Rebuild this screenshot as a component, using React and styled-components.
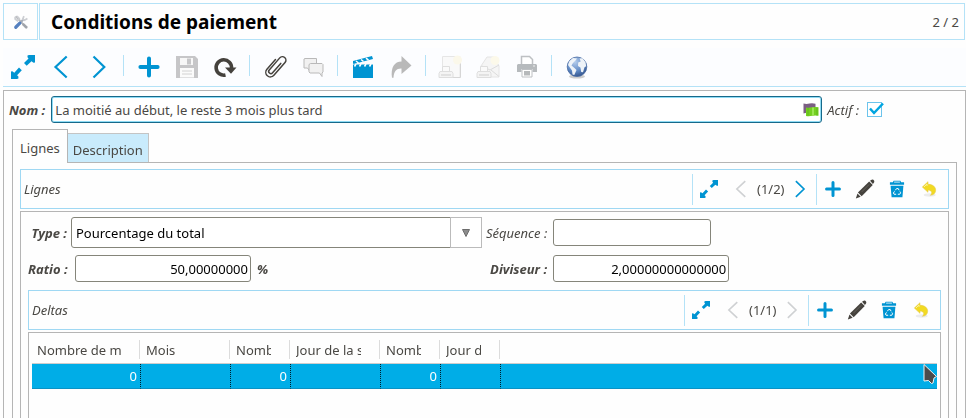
import React from "react";
import styled, { createGlobalStyle, css } from "styled-components";

const BLUE = "#0094d2";
const DARK = "#45423d";
const LIGHT_BLUE = "#b4e2f7";
const LINE_BLUE = "#9fd8f3";
const GREY = "#b5b5b5";
const TEXT = "#4a4844";

const GlobalStyle = createGlobalStyle`
  *, *::before, *::after { box-sizing: border-box; }
  body {
    margin: 0;
    background: #fefefe;
    color: ${TEXT};
    font: 13px/18px "Noto Sans", sans-serif;
  }
  button, input, select { font: inherit; color: inherit; margin: 0; }
`;

const Window = styled.main`
  height: 100vh;
  min-height: 400px;
  display: flex;
  flex-direction: column;
  overflow: hidden;
  padding: 3px 0 0 3px;
`;

const Header = styled.header`
  display: flex;
  gap: 1px;
  padding-right: 1px;
  height: 37px;
  flex: none;
`;

const MenuButton = styled.button`
  width: 35px;
  display: grid;
  place-items: center;
  padding: 0;
  border: 1px solid ${LIGHT_BLUE};
  background: none;
`;

const TitleBar = styled.div`
  flex: 1;
  display: flex;
  align-items: center;
  justify-content: space-between;
  padding: 0 5px 0 11px;
  border: 1px solid ${LIGHT_BLUE};
`;

const Title = styled.h1`
  margin: 0;
  color: #000;
  font-size: 19px;
  line-height: 26px;
  font-weight: 700;
`;

const Toolbar = styled.div`
  display: flex;
  align-items: center;
  flex: none;
  height: 39px;
  margin: 8px 0 3px;
  padding-left: 1px;
  border-bottom: 1px solid ${LIGHT_BLUE};
  background: #fcfdff;
`;

const ToolButton = styled.button`
  width: ${(p) => (p.$small ? 32 : 38)}px;
  height: 30px;
  padding: 0;
  border: 0;
  background: none;
  display: grid;
  place-items: center;
`;

const Divider = styled.span`
  width: 1px;
  height: 21px;
  margin: 0 6px 3px 5px;
  background: ${LIGHT_BLUE};
`;

const Frame = styled.section`
  flex: 1;
  min-height: 0;
  display: flex;
  flex-direction: column;
  border: 1px solid ${GREY};
  border-bottom: 0;
  padding: ${(p) => p.$pad};
`;

const NameRow = styled.div`
  display: flex;
  align-items: center;
  flex: none;
  padding: 0 83px 0 5px;
`;

const Label = styled.label`
  font-style: italic;
  font-weight: ${(p) => (p.$required ? 700 : 400)};
  white-space: nowrap;
  text-align: right;
`;

const NameBox = styled.div`
  flex: 1;
  display: flex;
  align-items: center;
  height: 27px;
  margin: 0 5px 0 6px;
  padding-right: 2px;
  border: 1px solid #17698a;
  border-radius: 3px;
  box-shadow: inset 0 0 0 1px #8fdcf5;
  background: #fff;
`;

const NameInput = styled.input`
  flex: 1;
  min-width: 0;
  border: 0;
  outline: 0;
  padding: 0 3px;
  background: none;
`;

const FlagButton = styled.button`
  padding: 0;
  border: 0;
  background: none;
  display: flex;
`;

const Check = styled.input`
  appearance: none;
  width: 15px;
  height: 15px;
  border: 1px solid #6cc4ec;
  background: #fff;
  display: block;
`;

const CheckBox = styled.span`
  position: relative;
  margin-left: 8px;
  svg { position: absolute; left: 1px; top: 0; pointer-events: none; }
`;

const TabArea = styled.div`
  flex: 1;
  min-height: 0;
  display: flex;
  flex-direction: column;
  padding: 6px 8px 0;
`;

const Tabs = styled.div`
  display: flex;
  align-items: flex-end;
  flex: none;
  height: 33px;
`;

const Tab = styled.button`
  padding: 4px 5px 0;
  border: 1px solid ${GREY};
  height: 30px;
  margin-bottom: -1px;
  ${(p) =>
    p.$active
      ? css`
          z-index: 1;
          height: 34px;
          padding: 2px 7px 0;
          border-bottom: 0;
          background: #fefefe;
        `
      : css`
          border-color: #c4c4c4 #c4c4c4 ${GREY};
          border-left: 0;
          background: #c9ebfc;
        `}
`;

const ListHeader = styled.div`
  display: flex;
  align-items: center;
  justify-content: space-between;
  flex: none;
  height: 40px;
  margin-bottom: 2px;
  padding: 0 3px;
  border: 1px solid ${LINE_BLUE};
`;

const Caption = styled.span`
  font-style: italic;
`;

const Actions = styled.div`
  display: flex;
  align-items: center;
`;

const ActionGroup = styled.div`
  display: flex;
  align-items: center;
  height: 31px;
  border-left: 1px solid ${LIGHT_BLUE};
`;

const Position = styled.span`
  width: 27px;
  text-align: center;
  white-space: nowrap;
`;

const Form = styled.div`
  display: grid;
  grid-template-columns: 39px 411px auto 1fr;
  grid-template-rows: 31px 27px;
  align-items: center;
  gap: 7px 4px;
  flex: none;
  margin-bottom: 8px;
`;

const Field = styled.input`
  width: ${(p) => p.$width}px;
  height: 27px;
  padding: 0 2px;
  border: 1px solid #85857a;
  border-radius: 3px;
  background: #fff;
  color: #000;
  text-align: right;
`;

const Combo = styled.div`
  position: relative;
  display: flex;
  height: 31px;
`;

const ComboSelect = styled.select`
  appearance: none;
  width: 100%;
  padding: 0 34px 0 4px;
  border: 1px solid #85857a;
  border-radius: 3px 0 0 3px;
  background: #fff;
  color: #000;
`;

const ComboArrow = styled.span`
  position: absolute;
  inset: 0 0 0 auto;
  width: 32px;
  display: grid;
  place-items: center;
  border: 1px solid #bbb;
  background: #fff;
  pointer-events: none;
`;

const WithUnit = styled.div`
  display: flex;
  align-items: center;
  gap: 6px;
  padding-left: 4px;
`;

const RightField = styled.div`
  padding-left: 2px;
`;

const TableArea = styled.div`
  position: relative;
`;

const Table = styled.table`
  width: 100%;
  table-layout: fixed;
  border-collapse: separate;
  border-spacing: 0;
`;

const Head = styled.th`
  height: 28px;
  padding: 0 20px 0 5px;
  text-align: left;
  font-weight: 400;
  white-space: nowrap;
  border-bottom: 1px solid #cdcdcd;
  background: ${(p) =>
    p.$last ? "none" : "linear-gradient(#dcdcdc, #dcdcdc) right 1px top 4px / 1px 19px no-repeat"};
  div { overflow: hidden; }
`;

const Cell = styled.td`
  height: 25px;
  padding: 0 3px;
  text-align: right;
  color: #fff;
  background: #00ade7;
  border-bottom: 1px solid #0a92c4;
  border-right: ${(p) => (p.$last ? "0" : "1px dotted #00202c")};
`;

const Pointer = styled.svg`
  position: absolute;
  right: 0;
  top: 27px;
`;

const Icon = ({ size = 24, children }) => (
  <svg width={size} height={size} viewBox="0 0 24 24" overflow="visible" aria-hidden="true">
    {children}
  </svg>
);

const Expand = (p) => (
  <Icon {...p}>
    <g fill={BLUE}>
      <path d="M16.500.5 18 0h6v7.500l-1.500.3-2-1.600-4.800 4.500-2.700-2.700 4.500-4.500-1-1.200z" />
      <path d="M0 16.500l1.300-.3 2 1.500 4.700-5.200 2.800 2.700-4.700 5 1.300 1.300v2L6 24H0z" />
    </g>
  </Icon>
);

const Chevron = ({ next, color = BLUE, ...p }) => (
  <Icon {...p}>
    <path
      d={next ? "M6.500 1.500 17.300 12 6.500 22.500" : "M17.700 1.500 6.500 12l11.200 10.500"}
      fill="none"
      stroke={color}
      strokeWidth="2.200"
    />
  </Icon>
);

const Plus = ({ bar = 4, ...p }) => (
  <Icon {...p}>
    <path d="M12 3.400v17.200M3.400 12h17.200" stroke={BLUE} strokeWidth={bar} strokeLinecap="round" />
  </Icon>
);

const Save = () => (
  <Icon>
    <path d="M1 1h19l3 3v19H1z" fill="#c6c6c8" />
    <path d="M5 3h13v7H5z" fill="#f7f7f7" />
    <path d="M12 3.500h4v6h-4z" fill="#c6c6c8" />
    <path d="M5 13h14v9.500H5z" fill="#fbfbfb" />
    <path d="M7 16h10M7 19h10" stroke="#d2d2d2" />
  </Icon>
);

const Refresh = () => (
  <Icon>
    <path d="M12.500 20A7.700 7.700 0 1 1 18.500 13" fill="none" stroke={DARK} strokeWidth="3.600" />
    <path d="M12 12.500h11.500L18 18.800z" fill={DARK} />
  </Icon>
);

const Clip = () => (
  <Icon>
    <path
      transform="rotate(41 12 12)"
      d="M7.400 6v13a4.600 4.600 0 0 0 9.200 0V2a3.500 3.500 0 0 0-7 0V18a2.200 2.200 0 0 0 4.400 0V5.500"
      fill="none"
      stroke={DARK}
      strokeWidth="1.500"
      strokeLinecap="round"
    />
  </Icon>
);

const Chat = () => (
  <Icon>
    <g fill="#f1f1f1" stroke="#b9b9b9">
      <path d="M4 3.500h11.500v9.500H9v3.500L6.500 13H3V4z" />
      <path d="M9.500 8.500H21l1 1v7.500l-1 1v3.500L18.500 18H9l-1-1V9.500z" />
    </g>
  </Icon>
);

const Clapper = () => (
  <Icon>
    <path d="M2 9.500h20V23H2z" fill={BLUE} />
    <path d="M2 6 21 1l1 3L3.500 8.800H2z" fill={BLUE} />
    <path d="m5 6 2.500 2M10 4.500l2.500 2M15 3.200l2.500 2M5 9l-1.500 2.500M10 9l-1.500 2.500M15 9l-1.500 2.500M20 9l-1.500 2.500" stroke="#fff" strokeWidth="1.500" />
  </Icon>
);

const Share = () => (
  <Icon>
    <path d="M12.500 1 22.500 10.500 12.500 19v-5.500C7.500 13.300 5 16 4.500 22.800H3C1.500 12.500 5.500 6.500 12.500 6.500z" fill="#b9b9b9" />
  </Icon>
);

const MiniPrinter = () => (
  <g stroke="#dedede" fill="#f4f4f4">
    <path d="M3.500 11.500h7v5h-7z" fill="#fafafa" />
    <path d="M1 16.500h12l1 2v4H0v-4z" />
    <path d="M2 20h10" stroke="#cfcfcf" />
  </g>
);

const Report = () => (
  <Icon>
    <path d="M3.500 1.500h17.500v21H3.500z" fill="#f9f9f9" stroke="#e6e6e6" />
    <path d="M21.500 7v15.500H14" fill="none" stroke="#d6d6d6" />
    <circle cx="18.500" cy="5" r="4.500" fill="#fbf8ea" />
    <MiniPrinter />
  </Icon>
);

const Mail = () => (
  <Icon>
    <path d="M4 11 10 2h7l5 9v11H4z" fill="#f5f5f5" stroke="#e4e4e4" />
    <path d="m5 11 8 4 9-5M14 15l8 6.500" fill="none" stroke="#dcdcdc" />
    <circle cx="18" cy="5.500" r="4.500" fill="#fcf9ea" />
    <MiniPrinter />
  </Icon>
);

const Printer = () => (
  <Icon>
    <path d="M6.500 9V1.500h8l3 3V9" fill="#fff" stroke="#bdc0c3" strokeWidth="1.500" />
    <path d="M3 9h18l1 1v7h-4.500v-3h-11v3H2v-7z" fill="#b6babd" />
    <path d="M7 14.500h10V22H7z" fill="#fff" stroke="#bdc0c3" />
    <path d="M9 16h6v4.500H9z" fill="#b6b9bb" />
    <path d="M18 11h2" stroke="#eee" />
  </Icon>
);

const Globe = () => (
  <Icon>
    <defs>
      <radialGradient id="sea" cx="40%" cy="25%" r="80%">
        <stop offset="0" stopColor="#b5cdec" />
        <stop offset="0.600" stopColor="#5f89c4" />
        <stop offset="1" stopColor="#304f86" />
      </radialGradient>
    </defs>
    <ellipse cx="12" cy="21.500" rx="8" ry="2" fill="#ccc" />
    <circle cx="12" cy="11.800" r="9.800" fill="url(#sea)" stroke="#4a6ca3" strokeWidth=".8" />
    <g fill="#eef3f8">
      <path d="M4.500 6 8 3l4 .5-1.500 2L8 8l-1.500 2.500L9.500 13l2 2-2.200 5-1.800-.5-.5-4L4.500 12 3 10z" />
      <path d="m14.500 3.500 3-.3 3 4 .7 4-1.700 1-1.500 5-1.800-.2-.8-4.500-2.400-1.500.2-3.500 2.500-1z" />
    </g>
  </Icon>
);

const Tools = () => (
  <Icon size={14}>
    <path d="M4 3 14 14" stroke="#b9bbbf" strokeWidth="3.500" strokeLinecap="round" />
    <path d="M8 16 17 7" stroke="#a4abb6" strokeWidth="3.500" />
    <path d="M2 3v4l4 3 3-4-4-4M17 2l-2 5 3 2 5-3" fill="none" stroke="#ccced2" strokeWidth="3" />
    <path d="m3 21 7-7" stroke="#5580bf" strokeWidth="5.500" strokeLinecap="round" />
    <path d="m16 16 5 5" stroke="#a0a4aa" strokeWidth="4.500" strokeLinecap="round" />
  </Icon>
);

const Flag = () => (
  <svg width="16" height="16" viewBox="0 0 16 16" aria-hidden="true">
    <path d="M.5 1.500q3 .8 6 0 3-.8 6 .3v8.700q-6-1-12 1z" fill="#7b5f83" />
    <path d="M3 5.500q3 .6 6-.2 3.500-.8 6.500 0v8.500q-3-.8-6 0-3.500.8-6.500.2z" fill="#74d020" />
    <path d="M10 5.500v8" stroke="#9be652" strokeWidth="2" />
    <path d="M5 6v7.500M14 5.500v8" stroke="#62b81b" />
  </svg>
);

const Pencil = () => (
  <Icon size={20}>
    <g fill={DARK}>
      <path d="m17 3 4.300 4.300L8 20.800l-4.500-4.500z" />
      <path d="m18 2.200 2-1.400q2-.5 3 1.200.8 1.500-.8 3L21.500 6zM3 17.500 6.800 21.300 1 23.300z" />
    </g>
    <path d="m8 15.500 9-9" stroke="#77736d" strokeWidth=".8" />
  </Icon>
);

const Trash = () => (
  <Icon size={20}>
    <g fill={BLUE}>
      <path d="M8 2h8l1 2h3.500v3h-17V4H7z" />
      <path d="M4.300 8h15.400L18.500 22h-13z" />
    </g>
    <path d="M8.500 3.700h7" stroke="#fff" />
    <path d="m10 13.500 1.500-2h2l1 2M15.500 15l.8 1.500-1 1.800H13M11 18.300H8.500l-.8-1.500 1.300-2" fill="none" stroke="#fff" strokeWidth="1.200" />
  </Icon>
);

const Undo = () => (
  <Icon size={16}>
    <ellipse cx="13" cy="21" rx="9" ry="2.500" fill="#ececec" />
    <path d="M2 9 10.500 1v4C18 5 22 9 22 14c0 4-3 7-8 7.500 3-2.500 3.500-7-3.500-8V17z" fill="#f2da22" stroke="#e3c647" strokeWidth=".8" />
    <path d="M4.500 9 9 4.500v3" fill="none" stroke="#faf09a" strokeWidth="1.500" />
  </Icon>
);

const toolGroups = [
  [
    ["Basculer la vue", <Expand />],
    ["Précédent", <Chevron />],
    ["Suivant", <Chevron next />],
  ],
  [
    ["Nouveau", <Plus />],
    ["Enregistrer", <Save />],
    ["Recharger", <Refresh />],
  ],
  [
    ["Pièces jointes", <Clip />],
    ["Notes", <Chat />],
  ],
  [
    ["Actions", <Clapper />],
    ["Relations", <Share />],
  ],
  [
    ["Rapport", <Report />],
    ["Courriel", <Mail />],
    ["Imprimer", <Printer />],
  ],
  [["Web", <Globe />]],
];

const columns = [
  { id: "months", name: "Nombre de m", width: 109, value: "0" },
  { id: "month", name: "Mois", width: 90, value: "" },
  { id: "weeks", name: "Nomb", width: 60, value: "0" },
  { id: "weekday", name: "Jour de la s", width: 90, value: "" },
  { id: "days", name: "Nomb", width: 60, value: "0" },
  { id: "day", name: "Jour d", width: 60, value: "" },
];

function ListToolbar({ title, position, hasNext }) {
  return (
    <ListHeader>
      <Caption>{title}</Caption>
      <Actions>
        <ActionGroup>
          <ToolButton $small aria-label="Basculer"><Expand size={18} /></ToolButton>
          <ToolButton $small aria-label="Précédent"><Chevron size={18} color="#cfd1d3" /></ToolButton>
          <Position>{position}</Position>
          <ToolButton $small aria-label="Suivant">
            <Chevron next size={18} color={hasNext ? BLUE : "#cfd1d3"} />
          </ToolButton>
        </ActionGroup>
        <ActionGroup>
          <ToolButton $small aria-label="Nouveau"><Plus size={18} /></ToolButton>
          <ToolButton $small aria-label="Modifier"><Pencil /></ToolButton>
          <ToolButton $small aria-label="Supprimer"><Trash /></ToolButton>
          <ToolButton $small aria-label="Annuler"><Undo /></ToolButton>
        </ActionGroup>
      </Actions>
    </ListHeader>
  );
}

export default function App() {
  return (
    <Window>
      <GlobalStyle />
      <Header>
        <MenuButton aria-label="Menu"><Tools /></MenuButton>
        <TitleBar>
          <Title>Conditions de paiement</Title>
          <span>2 / 2</span>
        </TitleBar>
      </Header>
      <Toolbar role="toolbar">
        {toolGroups.map((group, i) => (
          <React.Fragment key={i}>
            {i > 0 && <Divider />}
            {group.map(([label, icon]) => (
              <ToolButton key={label} aria-label={label}>{icon}</ToolButton>
            ))}
          </React.Fragment>
        ))}
      </Toolbar>
      <Frame $pad="5px 0 0">
        <NameRow>
          <Label htmlFor="name" $required>Nom :</Label>
          <NameBox>
            <NameInput id="name" autoFocus defaultValue="La moitié au début, le reste 3 mois plus tard" />
            <FlagButton aria-label="Traduire"><Flag /></FlagButton>
          </NameBox>
          <Label htmlFor="active">Actif :</Label>
          <CheckBox>
            <Check id="active" type="checkbox" defaultChecked />
            <svg width="16" height="14" viewBox="0 0 16 14" aria-hidden="true">
              <path d="m2 6.500 4 4.500 9-9.500" fill="none" stroke="#00a5e0" strokeWidth="2.500" />
            </svg>
          </CheckBox>
        </NameRow>
        <TabArea>
          <Tabs role="tablist">
            <Tab role="tab" aria-selected="true" $active>Lignes</Tab>
            <Tab role="tab" aria-selected="false">Description</Tab>
          </Tabs>
          <Frame $pad="6px 7px 0">
            <ListToolbar title="Lignes" position="(1/2)" hasNext />
            <Frame $pad="5px 7px 0">
              <Form>
                <Label htmlFor="type" $required>Type :</Label>
                <Combo>
                  <ComboSelect id="type" defaultValue="p">
                    <option value="p">Pourcentage du total</option>
                  </ComboSelect>
                  <ComboArrow>
                    <svg width="8" height="8" viewBox="0 0 8 8" aria-hidden="true">
                      <path d="M.5.500h7L4 7.500z" fill="#8c8c8c" stroke="#6c6c6c" />
                    </svg>
                  </ComboArrow>
                </Combo>
                <Label htmlFor="sequence">Séquence :</Label>
                <RightField><Field id="sequence" $width={158} defaultValue="" /></RightField>
                <Label htmlFor="ratio" $required>Ratio :</Label>
                <WithUnit>
                  <Field id="ratio" $width={176} defaultValue="50,00000000" />
                  <Label as="span" $required>%</Label>
                </WithUnit>
                <Label htmlFor="divisor" $required>Diviseur :</Label>
                <RightField><Field id="divisor" $width={176} defaultValue="2,00000000000000" /></RightField>
              </Form>
              <ListToolbar title="Deltas" position="(1/1)" />
              <Frame $pad="3px 3px 0">
                <TableArea>
                  <Table>
                    <colgroup>
                      {columns.map((c) => <col key={c.id} width={c.width} />)}
                      <col />
                    </colgroup>
                    <thead>
                      <tr>
                        {columns.map((c) => <Head key={c.id}><div>{c.name}</div></Head>)}
                        <Head $last />
                      </tr>
                    </thead>
                    <tbody>
                      <tr>
                        {columns.map((c) => <Cell key={c.id}>{c.value}</Cell>)}
                        <Cell $last />
                      </tr>
                    </tbody>
                  </Table>
                  <Pointer width="14" height="22" viewBox="0 0 14 22" aria-hidden="true">
                    <path d="M1 1.500V18l4.500-.5 3 3 1.500-.5 1-5 2.500-1.500z" fill="#4b4b4b" stroke="#f2f2f2" />
                  </Pointer>
                </TableArea>
              </Frame>
            </Frame>
          </Frame>
        </TabArea>
      </Frame>
    </Window>
  );
}
